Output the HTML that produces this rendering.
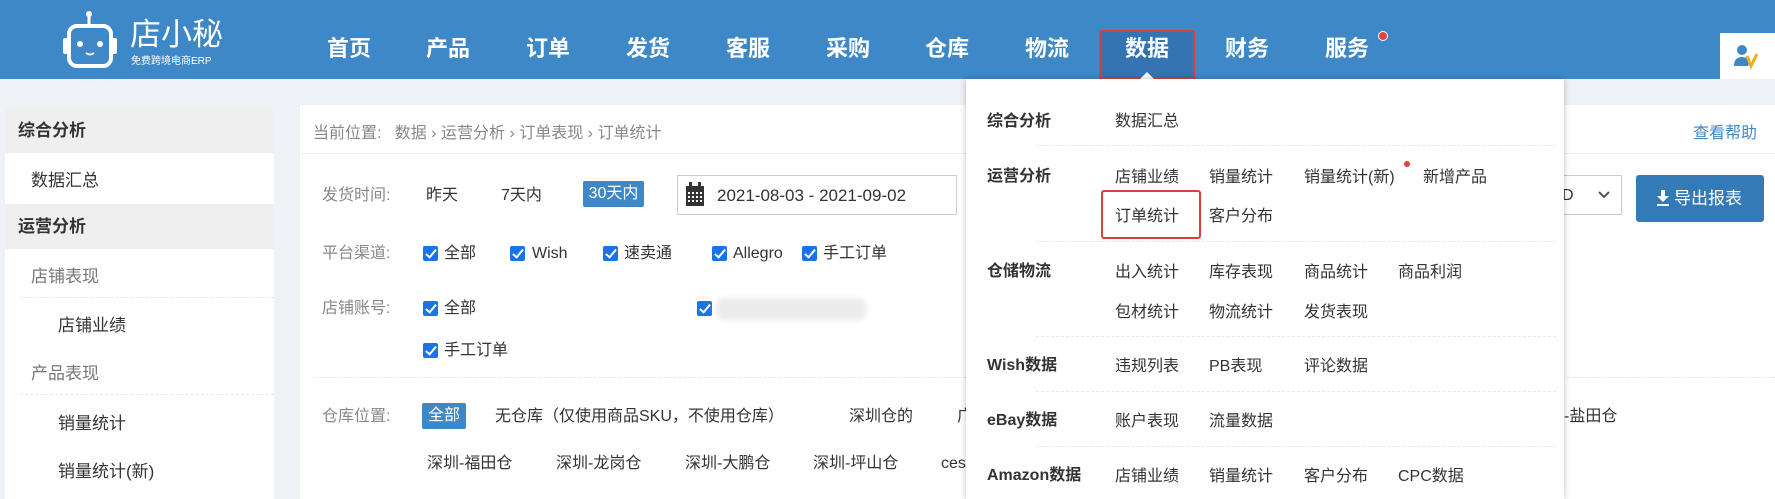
<!DOCTYPE html>
<html><head><meta charset="utf-8"><style>
*{margin:0;padding:0;box-sizing:border-box}
html,body{width:1775px;height:499px;overflow:hidden}
body{background:#eef1f6;font-family:"Liberation Sans","Noto Sans CJK SC",sans-serif;color:#333;position:relative}
.a{position:absolute;white-space:nowrap}
.hdr{position:absolute;left:0;top:0;width:1775px;height:79px;background:#3f88c8}
.nav{position:absolute;top:35px;font-size:22px;font-weight:bold;color:#fff;transform:translateX(-50%);line-height:28px}
.sb{position:absolute;left:5px;top:108px;width:269px;height:391px;background:#fff}
.sh{position:absolute;left:0;width:269px;height:45px;background:#efefef;font-weight:bold;font-size:17px;line-height:45px;padding-left:13px;color:#333}
.si{position:absolute;font-size:17px;color:#333;line-height:22px}
.sg{position:absolute;font-size:17px;color:#777;line-height:22px}
.dl{position:absolute;border-top:1px dashed #e8e8e8}
.main{position:absolute;left:300px;top:105px;width:1475px;height:394px;background:#fff}
.lb{position:absolute;font-size:16px;color:#888;line-height:22px}
.t{position:absolute;font-size:16px;color:#333;line-height:22px}
.cb{position:absolute;width:15px;height:15px;background:#1a73e8;border-radius:2px}
.cb:after{content:"";position:absolute;left:5px;top:1px;width:4px;height:9px;border:solid #fff;border-width:0 2px 2px 0;transform:rotate(40deg)}
.dd{position:absolute;left:966px;top:79px;width:598px;height:420px;background:#fff;box-shadow:0 0 6px rgba(0,0,0,.25)}
.dh{position:absolute;font-size:16px;font-weight:bold;color:#333;line-height:22px}
.dk{position:absolute;font-size:16px;color:#333;line-height:22px}
</style></head><body>
<div class="hdr"></div>
<svg class="a" style="left:60px;top:8px" width="70" height="64" viewBox="0 0 70 64">
<circle cx="29" cy="6" r="3" fill="#fff"/><rect x="27.5" y="6" width="3" height="12" fill="#fff"/>
<rect x="9" y="18" width="42" height="40" rx="8" fill="none" stroke="#fff" stroke-width="4"/>
<rect x="3" y="30" width="5" height="16" rx="2" fill="#fff"/><rect x="52" y="30" width="5" height="16" rx="2" fill="#fff"/>
<circle cx="20" cy="36" r="3" fill="#fff"/><circle cx="40" cy="36" r="3" fill="#fff"/>
<path d="M26 45 q4 3 8 0" stroke="#fff" stroke-width="2" fill="none"/>
</svg>
<div class="a" style="left:130px;top:17px;font-size:31px;color:#fff;line-height:36px">店小秘</div>
<div class="a" style="left:131px;top:56px;font-size:10px;color:#fff;line-height:12px">免费跨境电商ERP</div>
<div class="nav" style="left:349px">首页</div>
<div class="nav" style="left:448px">产品</div>
<div class="nav" style="left:548px">订单</div>
<div class="nav" style="left:648px">发货</div>
<div class="nav" style="left:748px">客服</div>
<div class="nav" style="left:848px">采购</div>
<div class="nav" style="left:947px">仓库</div>
<div class="nav" style="left:1047px">物流</div>
<div class="a" style="left:1099px;top:30px;width:96px;height:50px;background:#3574b3;border:2px solid #e03c3c;border-radius:3px"></div>
<div class="nav" style="left:1147px">数据</div>
<div class="a" style="left:1140px;top:72px;width:0;height:0;border-left:7px solid transparent;border-right:7px solid transparent;border-bottom:7px solid #fff"></div>
<div class="nav" style="left:1247px">财务</div>
<div class="nav" style="left:1347px">服务</div>
<div class="a" style="left:1378px;top:31px;width:10px;height:10px;border-radius:50%;background:#e8413c;border:1px solid #fff"></div>
<div class="a" style="left:1720px;top:33px;width:55px;height:46px;background:#fff"></div>
<svg class="a" style="left:1733px;top:42px" width="30" height="30" viewBox="0 0 30 30"><circle cx="9" cy="8" r="5" fill="#3f88c8"/><path d="M1 24 q0-9 8-9 q6 0 8 5 l-2 4z" fill="#3f88c8"/><path d="M14 14 l4 10 l6-12" stroke="#e8b020" stroke-width="3" fill="none"/></svg>

<div class="sb"></div>
<div class="sh" style="left:5px;top:108px">综合分析</div>
<div class="si" style="left:31px;top:170px">数据汇总</div>
<div class="sh" style="left:5px;top:204px">运营分析</div>
<div class="sg" style="left:31px;top:266px">店铺表现</div>
<div class="dl" style="left:20px;top:297px;width:254px"></div>
<div class="si" style="left:58px;top:315px">店铺业绩</div>
<div class="sg" style="left:31px;top:363px">产品表现</div>
<div class="dl" style="left:20px;top:394px;width:254px"></div>
<div class="si" style="left:58px;top:413px">销量统计</div>
<div class="si" style="left:58px;top:461px">销量统计(新)</div>

<div class="main"></div>
<div class="lb" style="left:313px;top:123px">当前位置:&nbsp;&nbsp; 数据 › 运营分析 › 订单表现 › 订单统计</div>
<div class="a" style="left:300px;top:153px;width:1475px;border-top:1px solid #eee"></div>
<div class="a" style="left:1693px;top:123px;font-size:16px;color:#3f88c8;line-height:22px">查看帮助</div>
<div class="lb" style="left:322px;top:185px">发货时间:</div>
<div class="t" style="left:426px;top:185px">昨天</div>
<div class="t" style="left:501px;top:185px">7天内</div>
<div class="a" style="left:583px;top:181px;width:61px;height:26px;background:#3f88c8;border-radius:2px;color:#fff;font-size:16px;text-align:center;line-height:26px">30天内</div>
<div class="a" style="left:677px;top:175px;width:280px;height:40px;border:1px solid #ccc;background:#fff"></div>
<svg class="a" style="left:685px;top:182px" width="20" height="26" viewBox="0 0 20 26"><rect x="1" y="4" width="18" height="20" fill="#333"/><rect x="4" y="0" width="3" height="6" fill="#333"/><rect x="13" y="0" width="3" height="6" fill="#333"/><g fill="#fff"><rect x="3" y="10" width="2" height="2"/><rect x="7" y="10" width="2" height="2"/><rect x="11" y="10" width="2" height="2"/><rect x="15" y="10" width="2" height="2"/><rect x="3" y="14" width="2" height="2"/><rect x="7" y="14" width="2" height="2"/><rect x="11" y="14" width="2" height="2"/><rect x="15" y="14" width="2" height="2"/><rect x="3" y="18" width="2" height="2"/><rect x="7" y="18" width="2" height="2"/><rect x="11" y="18" width="2" height="2"/><rect x="15" y="18" width="2" height="2"/></g></svg>
<div class="t" style="left:717px;top:185px;font-size:17px">2021-08-03 - 2021-09-02</div>

<div class="lb" style="left:322px;top:243px">平台渠道:</div>
<div class="cb" style="left:423px;top:246px"></div><div class="t" style="left:444px;top:243px">全部</div>
<div class="cb" style="left:510px;top:246px"></div><div class="t" style="left:532px;top:243px">Wish</div>
<div class="cb" style="left:603px;top:246px"></div><div class="t" style="left:624px;top:243px">速卖通</div>
<div class="cb" style="left:712px;top:246px"></div><div class="t" style="left:733px;top:243px">Allegro</div>
<div class="cb" style="left:802px;top:246px"></div><div class="t" style="left:823px;top:243px">手工订单</div>

<div class="lb" style="left:322px;top:298px">店铺账号:</div>
<div class="cb" style="left:423px;top:301px"></div><div class="t" style="left:444px;top:298px">全部</div>
<div class="cb" style="left:697px;top:301px"></div>
<div class="a" style="left:716px;top:298px;width:150px;height:22px;background:#ebebeb;border-radius:8px;filter:blur(3px)"></div>
<div class="cb" style="left:423px;top:343px"></div><div class="t" style="left:444px;top:340px">手工订单</div>
<div class="dl" style="left:314px;top:377px;width:1461px"></div>

<div class="lb" style="left:322px;top:406px">仓库位置:</div>
<div class="a" style="left:422px;top:403px;width:44px;height:26px;background:#3f88c8;border-radius:2px;color:#fff;font-size:16px;text-align:center;line-height:26px">全部</div>
<div class="t" style="left:495px;top:406px">无仓库（仅使用商品SKU，不使用仓库）</div>
<div class="t" style="left:849px;top:406px">深圳仓的</div>
<div class="t" style="left:957px;top:406px">广</div>
<div class="t" style="left:1564px;top:406px">-盐田仓</div>
<div class="t" style="left:427px;top:453px">深圳-福田仓</div>
<div class="t" style="left:556px;top:453px">深圳-龙岗仓</div>
<div class="t" style="left:685px;top:453px">深圳-大鹏仓</div>
<div class="t" style="left:813px;top:453px">深圳-坪山仓</div>
<div class="t" style="left:941px;top:453px">ces</div>

<div class="a" style="left:1560px;top:175px;width:62px;height:40px;border:1px solid #ccc;background:#fff"></div>
<div class="t" style="left:1562px;top:185px">D</div>
<svg class="a" style="left:1598px;top:191px" width="12" height="8" viewBox="0 0 12 8"><path d="M1 1 l5 5 l5-5" stroke="#555" stroke-width="2" fill="none"/></svg>
<div class="a" style="left:1636px;top:175px;width:128px;height:47px;background:#337ab7;border-radius:3px;color:#fff;font-size:17px;line-height:47px;padding-left:38px">导出报表</div>
<svg class="a" style="left:1656px;top:190px" width="14" height="16" viewBox="0 0 14 16"><path d="M5 0h4v6h4l-6 6l-6-6h4z" fill="#fff"/><rect x="1" y="14" width="12" height="2" fill="#fff"/></svg>

<div class="dd"></div>
<div class="dh" style="left:987px;top:111px">综合分析</div>
<div class="dk" style="left:1115px;top:111px">数据汇总</div>
<div class="dl" style="left:1036px;top:145px;width:520px"></div>
<div class="dh" style="left:987px;top:166px">运营分析</div>
<div class="dk" style="left:1115px;top:167px">店铺业绩</div>
<div class="dk" style="left:1209px;top:167px">销量统计</div>
<div class="dk" style="left:1304px;top:167px">销量统计(新)</div>
<div class="a" style="left:1404px;top:161px;width:6px;height:6px;border-radius:50%;background:#e8413c"></div>
<div class="dk" style="left:1423px;top:167px">新增产品</div>
<div class="a" style="left:1101px;top:190px;width:100px;height:49px;border:2px solid #e03c3c;border-radius:3px"></div>
<div class="dk" style="left:1115px;top:206px">订单统计</div>
<div class="dk" style="left:1209px;top:206px">客户分布</div>
<div class="dl" style="left:1036px;top:241px;width:520px"></div>
<div class="dh" style="left:987px;top:261px">仓储物流</div>
<div class="dk" style="left:1115px;top:262px">出入统计</div>
<div class="dk" style="left:1209px;top:262px">库存表现</div>
<div class="dk" style="left:1304px;top:262px">商品统计</div>
<div class="dk" style="left:1398px;top:262px">商品利润</div>
<div class="dk" style="left:1115px;top:302px">包材统计</div>
<div class="dk" style="left:1209px;top:302px">物流统计</div>
<div class="dk" style="left:1304px;top:302px">发货表现</div>
<div class="dl" style="left:1036px;top:336px;width:520px"></div>
<div class="dh" style="left:987px;top:355px">Wish数据</div>
<div class="dk" style="left:1115px;top:356px">违规列表</div>
<div class="dk" style="left:1209px;top:356px">PB表现</div>
<div class="dk" style="left:1304px;top:356px">评论数据</div>
<div class="dl" style="left:1036px;top:391px;width:520px"></div>
<div class="dh" style="left:987px;top:410px">eBay数据</div>
<div class="dk" style="left:1115px;top:411px">账户表现</div>
<div class="dk" style="left:1209px;top:411px">流量数据</div>
<div class="dl" style="left:1036px;top:446px;width:520px"></div>
<div class="dh" style="left:987px;top:465px">Amazon数据</div>
<div class="dk" style="left:1115px;top:466px">店铺业绩</div>
<div class="dk" style="left:1209px;top:466px">销量统计</div>
<div class="dk" style="left:1304px;top:466px">客户分布</div>
<div class="dk" style="left:1398px;top:466px">CPC数据</div>
</body></html>
